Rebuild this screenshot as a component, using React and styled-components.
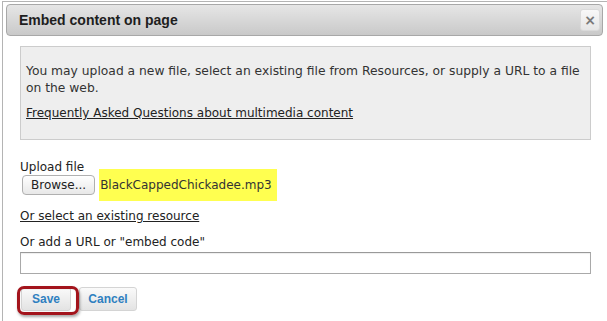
import styled, { createGlobalStyle } from 'styled-components';

const Global = createGlobalStyle`
  body {
    margin: 0;
    background: #fff;
    font-family: 'DejaVu Sans', Verdana, sans-serif;
  }
`;

const Page = styled.div`
  width: 607px;
  height: 321px;
  overflow: hidden;
  padding: 1px 0 0 2px;
  box-sizing: border-box;
`;

const Dialog = styled.div`
  border: 1px solid #b4b4b4;
  border-right: none;
  border-bottom: none;
  height: 330px;
  padding: 2px 4px 0 3px;
  box-sizing: border-box;
`;

const TitleBar = styled.div`
  display: flex;
  align-items: center;
  justify-content: space-between;
  height: 32px;
  box-sizing: border-box;
  padding: 0 2px 0 12px;
  border: 1px solid #a8a8a8;
  border-radius: 4px;
  background: linear-gradient(#e6e6e6, #c9c9c9);
`;

const Title = styled.h1`
  margin: 0;
  font-family: 'Liberation Sans', Arial, sans-serif;
  font-size: 14px;
  font-weight: bold;
  color: #1e1e1e;
`;

const CloseBtn = styled.button`
  width: 20px;
  height: 22px;
  padding: 0;
  border: 1px solid #dadada;
  border-radius: 3px;
  background: linear-gradient(#f8f8f8, #e6e6e6);
  color: #7a7a7a;
  font-family: 'DejaVu Sans', sans-serif;
  font-size: 14px;
  font-weight: bold;
  line-height: 20px;
`;

const Body = styled.div`
  padding: 10px 12px 0 14px;
`;

const InfoBox = styled.div`
  background: #eeeeee;
  border: 1px solid #cccccc;
  padding: 16px 6px 17px 5px;
  font-size: 12.3px;
  line-height: 17px;
  color: #333;
`;

const Para = styled.p`
  margin: 0 0 ${p => p.$gap || 0}px;
  font-size: ${p => p.$size || 12.3}px;
`;

const Link = styled.a`
  color: #222;
  text-decoration: underline;
  cursor: pointer;
`;

const Form = styled.div`
  padding-top: 20px;
  font-family: 'DejaVu Sans', 'Lucida Grande', sans-serif;
  font-size: 12px;
  color: #222;
`;

const Label = styled.div`
  line-height: 15px;
`;

const FileRow = styled.div`
  display: flex;
  align-items: center;
  gap: 4px;
  margin-top: -6px;
  padding-left: 2px;
`;

const Browse = styled.button`
  height: 20px;
  padding: 0 8px;
  border: 1px solid #b0b0b0;
  border-radius: 4px;
  background: linear-gradient(#ffffff, #e8e8e8);
  font-family: 'DejaVu Sans', sans-serif;
  font-size: 12px;
  color: #222;
`;

const FileName = styled.span`
  background: #ffff50;
  padding: 8px 5px 8px 1px;
  line-height: 16px;
  color: #333;
`;

const ResourceRow = styled.div`
  margin-top: 7px;
  line-height: 16px;
`;

const UrlLabel = styled.div`
  margin-top: 11px;
  line-height: 15px;
`;

const UrlInput = styled.input`
  display: block;
  width: 100%;
  height: 22px;
  box-sizing: border-box;
  margin-top: 2px;
  border: 1px solid #a9a9a9;
  border-top-color: #999;
  box-shadow: inset 0 1px 1px #eee;
  outline: none;
`;

const Actions = styled.div`
  display: flex;
  margin-top: 13px;
  padding-left: 1px;
`;

const Highlight = styled.div`
  position: relative;
  display: flex;
  margin-right: 8px;
  &::after {
    content: '';
    position: absolute;
    left: -4px;
    top: -1px;
    width: 62px;
    height: 29px;
    border: 3px solid #a3141c;
    border-radius: 7px;
    box-shadow: 1px 2px 3px rgba(0, 0, 0, 0.35), inset 0 0 1px rgba(0, 0, 0, 0.3);
    box-sizing: border-box;
    pointer-events: none;
  }
`;

const Btn = styled.button`
  height: 24px;
  width: ${p => p.$w}px;
  padding: 0;
  border: 1px solid #d4d4d4;
  border-radius: 3px;
  background: linear-gradient(#fafafa, #e3e3e3);
  font-family: 'Liberation Sans', Arial, sans-serif;
  font-size: 12px;
  font-weight: bold;
  color: #2f80c0;
`;

export default function App() {
  return (
    <Page>
      <Global />
      <Dialog>
        <TitleBar>
          <Title>Embed content on page</Title>
          <CloseBtn>×</CloseBtn>
        </TitleBar>
        <Body>
          <InfoBox>
            <Para $gap={8}>
              You may upload a new file, select an existing file from Resources, or supply a URL to a file
              on the web.
            </Para>
            <Para $size={12}>
              <Link>Frequently Asked Questions about multimedia content</Link>
            </Para>
          </InfoBox>
          <Form>
            <Label>Upload file</Label>
            <FileRow>
              <Browse>Browse...</Browse>
              <FileName>BlackCappedChickadee.mp3</FileName>
            </FileRow>
            <ResourceRow>
              <Link>Or select an existing resource</Link>
            </ResourceRow>
            <UrlLabel>Or add a URL or "embed code"</UrlLabel>
            <UrlInput type="text" />
            <Actions>
              <Highlight>
                <Btn $w={50}>Save</Btn>
              </Highlight>
              <Btn $w={58}>Cancel</Btn>
            </Actions>
          </Form>
        </Body>
      </Dialog>
    </Page>
  );
}
